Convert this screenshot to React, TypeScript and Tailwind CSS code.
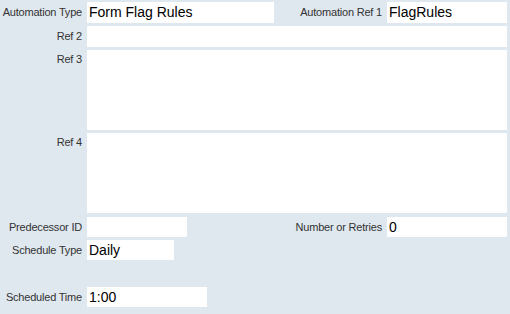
export default function App() {
  const label =
    "shrink-0 text-right pr-[5px] text-[11px] tracking-[-0.2px] text-[#333] font-['Liberation_Sans',Arial,sans-serif]";
  const field =
    "bg-white pl-[2px] text-[14px] leading-[20px] text-black font-['Liberation_Sans',Arial,sans-serif]";

  return (
    <div className="w-[510px] h-[314px] bg-[#dfe7ef] pt-[2px] overflow-hidden">
      {/* Row 1 */}
      <div className="flex items-center h-[21px]">
        <div className={`${label} w-[87px]`}>Automation Type</div>
        <div className={`${field} w-[187px] h-[21px] leading-[21px]`}>Form Flag Rules</div>
        <div className={`${label} w-[113px]`}>Automation Ref 1</div>
        <div className={`${field} w-[120px] h-[21px] leading-[21px]`}>FlagRules</div>
      </div>

      {/* Ref 2 */}
      <div className="flex items-center h-[21px] mt-[3px]">
        <div className={`${label} w-[87px]`}>Ref 2</div>
        <div className={`${field} w-[420px] h-[21px]`} />
      </div>

      {/* Ref 3 */}
      <div className="flex items-start h-[80px] mt-[3px]">
        <div className={`${label} w-[87px] pt-[1px]`}>Ref 3</div>
        <div className={`${field} w-[420px] h-[80px]`} />
      </div>

      {/* Ref 4 */}
      <div className="flex items-start h-[80px] mt-[3px]">
        <div className={`${label} w-[87px] pt-[1px]`}>Ref 4</div>
        <div className={`${field} w-[420px] h-[80px]`} />
      </div>

      {/* Predecessor / Retries */}
      <div className="flex items-center h-[20px] mt-[4px]">
        <div className={`${label} w-[87px]`}>Predecessor ID</div>
        <div className={`${field} w-[100px] h-[20px]`} />
        <div className={`${label} w-[200px]`}>Number or Retries</div>
        <div className={`${field} w-[120px] h-[20px]`}>0</div>
      </div>

      {/* Schedule Type */}
      <div className="flex items-center h-[20px] mt-[3px]">
        <div className={`${label} w-[87px]`}>Schedule Type</div>
        <div className={`${field} w-[87px] h-[20px]`}>Daily</div>
      </div>

      {/* Scheduled Time */}
      <div className="flex items-center h-[20px] mt-[27px]">
        <div className={`${label} w-[87px]`}>Scheduled Time</div>
        <div className={`${field} w-[120px] h-[20px]`}>1:00</div>
      </div>
    </div>
  );
}
